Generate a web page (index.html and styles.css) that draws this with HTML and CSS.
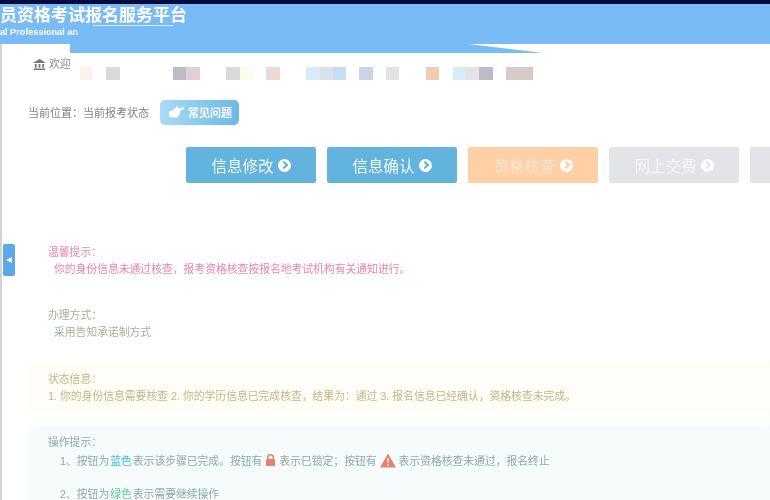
FILE: index.html
```html
<!DOCTYPE html>
<html lang="zh-CN">
<head>
    <meta charset="UTF-8">
    <meta name="viewport" content="width=device-width, initial-scale=1.0">
    <title>当前报考状态</title>
    <link rel="stylesheet" href="styles.css">
</head>
<body>
    <div class="topbar"></div>

    <header class="banner">
        <h1>员资格考试报名服务平台</h1>
        <p>al Professional an</p>
        <span class="swoosh"></span>
    </header>

    <div class="side-tab"><span class="side-arrow"></span></div>

    <div class="container">
        <section class="welcome">
            <svg class="bank-icon" viewBox="0 0 14 14" width="13" height="13">
                <path d="M7 1 L13 4.5 V5.5 H1 V4.5 Z M2 6.5 H4 V10.5 H2 Z M6 6.5 H8 V10.5 H6 Z M10 6.5 H12 V10.5 H10 Z M1 11.3 H13 V13 H1 Z" fill="#77777c"/>
            </svg>
            <span class="welcome-text">欢迎</span>
            <div class="mosaic">
                <i class="m-pink"></i><i></i><i class="m-gray"></i><i></i><i></i><i></i><i></i>
                <i class="m-dark"></i><i class="m-rose"></i><i></i><i></i>
                <i class="m-gray"></i><i class="m-yellow"></i><i></i><i class="m-salmon"></i><i></i><i></i>
                <i class="m-ice"></i><i class="m-steel"></i><i class="m-sky"></i><i></i><i class="m-slate"></i><i></i>
                <i class="m-light"></i><i></i><i></i><i class="m-orange"></i><i></i>
                <i class="m-ice"></i><i class="m-light"></i><i class="m-dark"></i><i></i>
                <i class="m-taupe"></i><i class="m-taupe"></i>
            </div>
        </section>

        <section class="crumb">
            <span>当前位置：当前报考状态</span>
            <a class="faq">
                <svg viewBox="0 0 18 15" width="17" height="14">
                    <path d="M1 7 L5 5.5 L9 1.5 C10 0.8 11 1.6 10.4 3 L10 4 L16 2.5 C17.6 2.2 18 4.2 16.4 4.8 L12.5 6 C13.4 7 13 8.4 12.2 8.8 C12.6 9.8 12 10.8 11.2 11 C11.4 12.2 10.6 13.4 9.4 13.4 H5.5 L1 12.4 Z" fill="#fff"/>
                </svg>
                常见问题
            </a>
        </section>

        <nav class="steps">
            <a class="step done">信息修改 <span class="go"></span></a>
            <a class="step done">信息确认 <span class="go"></span></a>
            <a class="step current">资格核查 <span class="go"></span></a>
            <a class="step todo">网上交费 <span class="go"></span></a>
            <a class="step todo"></a>
        </nav>

        <section class="notice notice-tip">
            <h3>温馨提示：</h3>
            <p class="indent">你的身份信息未通过核查，报考资格核查按报名地考试机构有关通知进行。</p>
        </section>

        <section class="notice notice-way">
            <h3>办理方式：</h3>
            <p class="indent">采用告知承诺制方式</p>
        </section>

        <section class="notice notice-status">
            <h3>状态信息：</h3>
            <p>1. 你的身份信息需要核查 2. 你的学历信息已完成核查，结果为：通过 3. 报名信息已经确认，资格核查未完成。</p>
        </section>

        <section class="notice notice-help">
            <h3>操作提示：</h3>
            <p class="help-line">1、按钮为<b class="blue">蓝色</b>表示该步骤已完成。按钮有
                <svg viewBox="0 0 12 15" width="11" height="14"><path d="M3 7 V4.5 C3 1 9 1 9 4.5 V7" fill="none" stroke="#e8806f" stroke-width="1.6"/><rect x="1" y="6.5" width="10" height="7.5" rx="1" fill="#e8806f"/></svg>
                表示已锁定；按钮有
                <svg viewBox="0 0 16 15" width="16" height="15"><path d="M8 0.5 L16 14.5 H0 Z" fill="#e8806f"/><path d="M7.3 5 H8.7 V10 H7.3 Z M7.3 11 H8.7 V12.6 H7.3 Z" fill="#fff"/></svg>
                表示资格核查未通过，报名终止</p>
            <p class="help-line">2、按钮为<b class="green">绿色</b>表示需要继续操作</p>
        </section>
    </div>
</body>
</html>
```

FILE: styles.css
```css
* {
    margin: 0;
    padding: 0;
    box-sizing: border-box;
}

html, body {
    height: 100%;
    overflow: hidden;
}

body {
    font-family: "Liberation Sans", "Noto Sans CJK SC", sans-serif;
    background-color: #fff;
    color: #777;
    font-size: 10.8px;
}

.topbar {
    height: 4px;
    background-color: #020a3e;
}

.banner {
    position: relative;
    height: 49px;
    margin-bottom: -9px;
    color: #fff;
    background-color: #79bcf5;
    clip-path: polygon(0 0, 100% 0, 100% 40px, 468px 40px, 543px 49px, 70px 49px, 70px 40px, 0 40px);
    filter: blur(0.4px);
    white-space: nowrap;
}

.banner h1 {
    font-size: 17px;
    line-height: 23px;
}

.banner p {
    font-size: 9.1px;
    font-weight: bold;
    line-height: 11px;
}

.swoosh {
    position: absolute;
    left: 93px;
    top: 21px;
    width: 80px;
    height: 1px;
    background-color: #dcefff;
}

.side-tab {
    position: absolute;
    left: 3px;
    top: 244px;
    width: 12px;
    height: 32px;
    border-radius: 2px;
    background-color: #5aa9ea;
    display: flex;
    align-items: center;
    justify-content: center;
}

.side-arrow {
    border-top: 3.5px solid transparent;
    border-bottom: 3.5px solid transparent;
    border-right: 6px solid #fff;
}

.container {
    border-left: 2px solid #d4d4d4;
    height: 456px;
    filter: blur(0.5px);
}

.welcome {
    height: 55px;
    padding: 14px 0 0 31px;
    display: flex;
    align-items: flex-start;
    gap: 3px;
}

.welcome-text {
    color: #8a8a8a;
    line-height: 13px;
}

.mosaic {
    display: flex;
    margin-left: 6px;
    margin-top: 9px;
}

.mosaic i {
    width: 13.33px;
    height: 13.33px;
}

.m-pink { background-color: #fdf3ee; }
.m-gray { background-color: #d9d9df; }
.m-dark { background-color: #bdbcc6; }
.m-rose { background-color: #e0d0d6; }
.m-yellow { background-color: #fdfbea; }
.m-salmon { background-color: #ecdad2; }
.m-ice { background-color: #d8ecf7; }
.m-steel { background-color: #d9e2e8; }
.m-sky { background-color: #c6dff1; }
.m-slate { background-color: #c9d5e2; }
.m-light { background-color: #e3e3e5; }
.m-orange { background-color: #f0cdb2; }
.m-taupe { background-color: #d6cbca; }

.crumb {
    height: 26px;
    padding-left: 26px;
    display: flex;
    align-items: center;
    gap: 11px;
    font-size: 11px;
    color: #84848a;
}

.faq {
    width: 79px;
    height: 25px;
    border-radius: 5px;
    background: linear-gradient(to right, #a8dcf3, #6cb9e8);
    color: #fff;
    font-weight: bold;
    display: flex;
    align-items: center;
    gap: 3px;
    padding-left: 8px;
}

.steps {
    display: flex;
    gap: 11px;
    margin: 22px 0 0 184px;
    width: 700px;
}

.step {
    flex: 0 0 130px;
    height: 36px;
    border-radius: 2px;
    color: #eef7fc;
    font-size: 15.5px;
    display: flex;
    align-items: center;
    justify-content: center;
    gap: 4px;
}

.done { background-color: #62b4df; }
.current { background-color: #ffcfa5; color: #ffe6d2; }
.todo { background-color: #e2e4e8; color: #f4f5f7; }

.go {
    width: 13px;
    height: 13px;
    border-radius: 50%;
    background-color: #fff;
    position: relative;
}

.go::after {
    content: "";
    position: absolute;
    left: 3px;
    top: 3.8px;
    width: 4px;
    height: 4px;
    border-top: 2px solid #62b4df;
    border-right: 2px solid #62b4df;
    transform: rotate(45deg);
}

.current .go::after { border-color: #ffcfa5; }
.todo .go::after { border-color: #e2e4e8; }

.notice {
    padding-left: 46px;
    line-height: 16.5px;
}

.notice h3 {
    font-size: 10.8px;
    font-weight: normal;
}

.indent {
    padding-left: 6px;
}

.notice-tip {
    margin-top: 61px;
    color: #e886aa;
}

.notice-way {
    margin-top: 30px;
    color: #a2b595;
}

.notice-status {
    margin: 22px 0 0 28px;
    padding: 9px 0 10px 18px;
    height: 52px;
    background-color: #fffdf8;
    box-shadow: 0 0 8px #fffdf8;
    color: #c9b486;
}

.notice-help {
    margin: 12px 0 0 28px;
    padding: 8px 0 0 18px;
    height: 90px;
    background-color: #f6fcfc;
    box-shadow: 0 0 8px #f6fcfc;
    color: #8fa7a8;
}

.help-line {
    padding-left: 12px;
    margin-top: 2px;
    height: 31px;
    display: flex;
    align-items: flex-start;
    gap: 3px;
    white-space: nowrap;
}

.help-line b {
    font-weight: normal;
    margin: 0 -2px;
}

.blue { color: #46bcdc; }
.green { color: #58d197; }
```
